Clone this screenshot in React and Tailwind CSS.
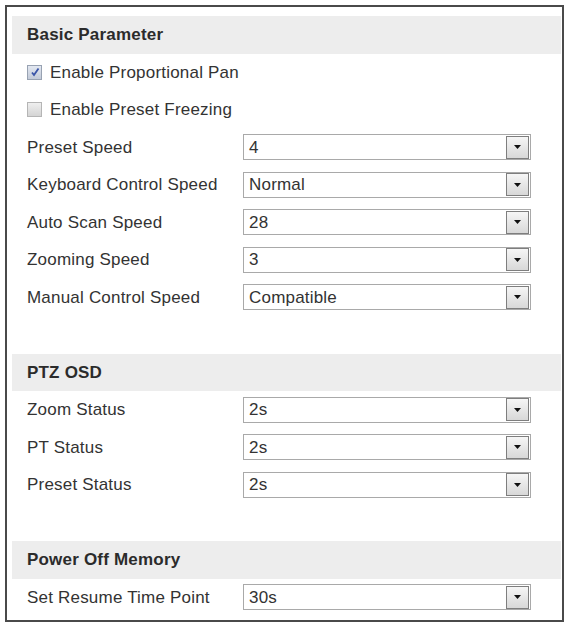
import React from "react";

const font = { fontFamily: '"Liberation Sans", Arial, sans-serif' };

function Select({ value }) {
  return (
    <div className="ml-[216px] flex h-[26px] w-[288px] items-center border border-[#a9a9a9] bg-white pl-[5px] pr-[1px]">
      <span className="flex-1 text-[#333]">{value}</span>
      <div className="flex h-[23px] w-[23px] items-center justify-center border border-[#7e7e7e] bg-gradient-to-b from-[#f6f6f6] to-[#d8d8d8]">
        <svg width="9" height="6" viewBox="0 0 9 6">
          <polygon points="1,1 8,1 4.5,5" fill="#111" />
        </svg>
      </div>
    </div>
  );
}

function Row({ label, value }) {
  return (
    <div className="flex h-[37.5px] items-center pl-[15px]">
      <span className="w-0 whitespace-nowrap text-[#333]">{label}</span>
      <Select value={value} />
    </div>
  );
}

function Header({ title }) {
  return (
    <div className="flex h-[37.5px] items-center bg-[#ededed] pl-[15px] font-bold text-[#2b2b2b]">
      {title}
    </div>
  );
}

function Check({ label, checked }) {
  return (
    <div className="flex h-[37.5px] items-center pl-[15px] text-[#333]">
      <div
        className={
          "mr-[8px] flex h-[15px] w-[15px] items-center justify-center border " +
          (checked
            ? "border-[#98a2b2] bg-gradient-to-b from-[#e3e8f1] to-[#c2cad8]"
            : "border-[#b5b5b5] bg-gradient-to-b from-[#efefef] to-[#d4d4d4]")
        }
      >
        {checked && (
          <svg width="10" height="10" viewBox="0 0 10 10">
            <path d="M2 5.5 L4 8 L8.5 1.5" stroke="#3a55a8" strokeWidth="1.8" fill="none" />
          </svg>
        )}
      </div>
      <span className="whitespace-nowrap">{label}</span>
    </div>
  );
}

function Spacer() {
  return <div className="h-[37.5px]" />;
}

export default function App() {
  return (
    <div className="h-[628px] w-[570px] bg-white pl-[5px] pt-[5px]" style={font}>
      <div className="h-[617px] w-[559px] border-2 border-[#4a4a4a] pl-[5px] pr-[1px] pt-[9px] text-[17px] tracking-[0.2px]">
        <Header title="Basic Parameter" />
        <Check label="Enable Proportional Pan" checked />
        <Check label="Enable Preset Freezing" />
        <Row label="Preset Speed" value="4" />
        <Row label="Keyboard Control Speed" value="Normal" />
        <Row label="Auto Scan Speed" value="28" />
        <Row label="Zooming Speed" value="3" />
        <Row label="Manual Control Speed" value="Compatible" />
        <Spacer />
        <Header title="PTZ OSD" />
        <Row label="Zoom Status" value="2s" />
        <Row label="PT Status" value="2s" />
        <Row label="Preset Status" value="2s" />
        <Spacer />
        <Header title="Power Off Memory" />
        <Row label="Set Resume Time Point" value="30s" />
      </div>
    </div>
  );
}
